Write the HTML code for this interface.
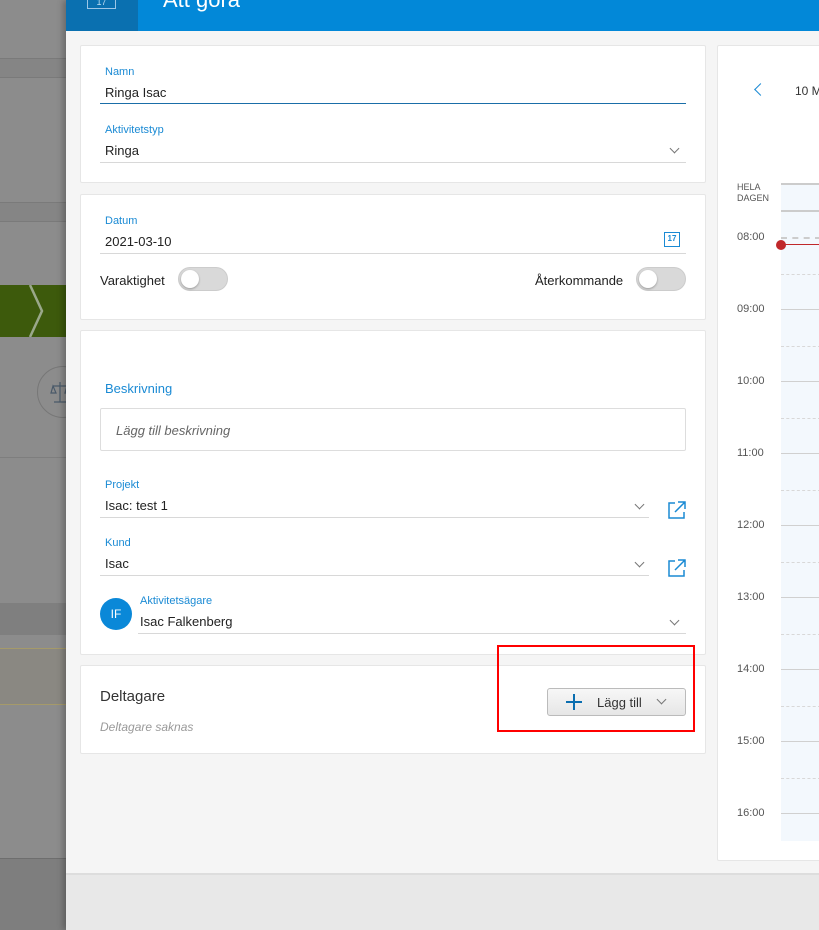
<!DOCTYPE html><html><head><meta charset="utf-8"><style>
*{margin:0;padding:0;box-sizing:border-box}
body{width:819px;height:930px;overflow:hidden;position:relative;font-family:"Liberation Sans",sans-serif;background:#8c8c8c}
.a{position:absolute}
.card{position:absolute;background:#fff;border:1px solid #e6e6e6;border-radius:2px}
.lbl{position:absolute;font-size:11px;color:#1a8ad4}
.val{position:absolute;font-size:13px;color:#222}
.ln{position:absolute;height:1px;background:#d8d8d8}
.chev{position:absolute;width:7px;height:7px;border-right:1px solid #777;border-bottom:1px solid #777;transform:rotate(45deg)}
.tog{position:absolute;width:50px;height:24px;border-radius:12px;background:#d9d9d9;border:1px solid #ccc}
.tog:after{content:"";position:absolute;left:2px;top:2px;width:18px;height:18px;border-radius:50%;background:#fff;box-shadow:0 1px 2px rgba(0,0,0,.3)}
.t{position:absolute;left:737px;font-size:11px;color:#555}
.hl{position:absolute;left:781px;width:40px;height:1px;background:#d0d0d0}
.dl{position:absolute;left:781px;width:40px;border-top:1px dashed #d8d8d8}
</style></head><body>
<div class="a" style="left:0;top:58px;width:66px;height:20px;background:#858585;border-top:1px solid #7a7a7a;border-bottom:1px solid #7a7a7a"></div>
<div class="a" style="left:0;top:202px;width:66px;height:20px;background:#858585;border-top:1px solid #7a7a7a;border-bottom:1px solid #7a7a7a"></div>
<div class="a" style="left:0;top:285px;width:66px;height:52px;background:#3d5a0c"></div>
<svg class="a" style="left:28px;top:285px" width="16" height="52"><path d="M2 0L14 26L2 52" fill="none" stroke="#9aa88a" stroke-width="2.5"/></svg>
<div class="a" style="left:37px;top:366px;width:52px;height:52px;border-radius:50%;border:1px solid #777"></div>
<svg class="a" style="left:50px;top:380px" width="20" height="24" fill="none" stroke="#4a5a6a" stroke-width="1.2"><path d="M10 2v20M4 22h12M3 6h14M3 6l-2 7h5zM17 6l-2 7h5z"/></svg>
<div class="a" style="left:0;top:457px;width:66px;height:10px;border-top:1px solid #7e7e7e"></div>
<div class="a" style="left:0;top:603px;width:66px;height:32px;background:#7f7f7f"></div>
<div class="a" style="left:0;top:648px;width:66px;height:57px;background:#8a8882;border-top:1px solid #a59a6a;border-bottom:1px solid #a59a6a"></div>
<div class="a" style="left:0;top:858px;width:66px;height:72px;background:#7e7e7e;border-top:1px solid #6e6e6e"></div>
<div class="a" style="left:66px;top:0;width:753px;height:930px;background:#f5f5f5;box-shadow:-3px 0 6px rgba(0,0,0,.25)"></div>
<div class="a" style="left:66px;top:0;width:753px;height:31px;background:#0288d8"></div>
<div class="a" style="left:66px;top:0;width:72px;height:31px;background:#0a70b0"></div>
<div class="a" style="left:87px;top:-4px;width:29px;height:13px;border:1px solid #9cc6e6;color:#bcdcf2;font-size:9px;text-align:center;line-height:10px">17</div>
<div class="a" style="left:163px;top:-13px;font-size:22px;color:#fff">Att göra</div>
<div class="a" style="left:66px;top:873px;width:753px;height:57px;background:#e8e8e8;border-top:2px solid #ddd"></div>
<div class="card" style="left:80px;top:45px;width:626px;height:138px"></div>
<div class="lbl" style="left:105px;top:66px">Namn</div>
<div class="val" style="left:105px;top:85px">Ringa Isac</div>
<div class="a" style="left:100px;top:103px;width:586px;height:1px;background:#1a6ea8"></div>
<div class="lbl" style="left:105px;top:124px">Aktivitetstyp</div>
<div class="val" style="left:105px;top:143px">Ringa</div>
<div class="ln" style="left:100px;top:162px;width:586px"></div>
<div class="chev" style="left:671px;top:145px"></div>
<div class="card" style="left:80px;top:194px;width:626px;height:126px"></div>
<div class="lbl" style="left:105px;top:215px">Datum</div>
<div class="val" style="left:105px;top:234px">2021-03-10</div>
<div class="ln" style="left:100px;top:253px;width:586px"></div>
<div class="a" style="left:664px;top:232px;width:16px;height:15px;border:1.5px solid #1a8ad4;font-size:8px;color:#1a8ad4;text-align:center;line-height:11px;font-weight:bold">17</div>
<div class="val" style="left:100px;top:273px">Varaktighet</div>
<div class="tog" style="left:178px;top:267px"></div>
<div class="val" style="left:535px;top:273px">Återkommande</div>
<div class="tog" style="left:636px;top:267px"></div>
<div class="card" style="left:80px;top:330px;width:626px;height:325px"></div>
<div class="a" style="left:105px;top:381px;font-size:13px;color:#1a8ad4">Beskrivning</div>
<div class="a" style="left:100px;top:408px;width:586px;height:43px;border:1px solid #ddd;border-radius:2px"></div>
<div class="a" style="left:116px;top:423px;font-size:13px;color:#666;font-style:italic">Lägg till beskrivning</div>
<div class="lbl" style="left:105px;top:479px">Projekt</div>
<div class="val" style="left:105px;top:498px">Isac: test 1</div>
<div class="ln" style="left:100px;top:517px;width:549px"></div>
<div class="chev" style="left:636px;top:501px"></div>
<svg class="a" style="left:668px;top:501px" width="18" height="18" viewBox="0 0 18 18" fill="none" stroke="#1a8ad4" stroke-width="1.5"><path d="M7 2H1v15h15v-6M10 1h7v7M17 1L7 11"/></svg>
<div class="lbl" style="left:105px;top:537px">Kund</div>
<div class="val" style="left:105px;top:556px">Isac</div>
<div class="ln" style="left:100px;top:575px;width:549px"></div>
<div class="chev" style="left:636px;top:559px"></div>
<svg class="a" style="left:668px;top:559px" width="18" height="18" viewBox="0 0 18 18" fill="none" stroke="#1a8ad4" stroke-width="1.5"><path d="M7 2H1v15h15v-6M10 1h7v7M17 1L7 11"/></svg>
<div class="a" style="left:100px;top:598px;width:32px;height:32px;border-radius:50%;background:#0a88d8;color:#fff;font-size:12px;text-align:center;line-height:32px">IF</div>
<div class="lbl" style="left:140px;top:595px">Aktivitetsägare</div>
<div class="val" style="left:140px;top:614px">Isac Falkenberg</div>
<div class="ln" style="left:138px;top:633px;width:548px"></div>
<div class="chev" style="left:671px;top:617px"></div>
<div class="card" style="left:80px;top:665px;width:626px;height:89px"></div>
<div class="a" style="left:100px;top:688px;font-size:15px;color:#333">Deltagare</div>
<div class="a" style="left:100px;top:720px;font-size:12px;color:#999;font-style:italic">Deltagare saknas</div>
<div class="a" style="left:547px;top:688px;width:139px;height:28px;border:1px solid #bbb;border-radius:3px;background:linear-gradient(#f7f7f7,#e6e6e6)"></div>
<div class="a" style="left:566px;top:701px;width:16px;height:2px;background:#0a6eb0"></div>
<div class="a" style="left:573px;top:694px;width:2px;height:16px;background:#0a6eb0"></div>
<div class="a" style="left:597px;top:695px;font-size:13px;color:#333">Lägg till</div>
<div class="chev" style="left:658px;top:696px"></div>
<div class="a" style="left:497px;top:645px;width:198px;height:87px;border:2px solid #f00"></div>
<div class="card" style="left:717px;top:45px;width:110px;height:816px"></div>
<div class="a" style="left:756px;top:85px;width:9px;height:9px;border-left:1.5px solid #1a8ad4;border-bottom:1.5px solid #1a8ad4;transform:rotate(45deg)"></div>
<div class="a" style="left:795px;top:84px;font-size:12px;color:#333;white-space:nowrap">10 Mars</div>
<div class="a" style="left:781px;top:183px;width:40px;height:658px;background:#f3f8fd"></div>
<div class="hl" style="top:183px;background:#ccc;height:2px"></div>
<div class="hl" style="top:210px;background:#ccc;height:2px"></div>
<div class="t" style="top:182px;font-size:9px;line-height:11px">HELA<br>DAGEN</div>
<div class="t" style="top:231px">08:00</div>
<div class="dl" style="top:237px;border-top:2px dashed #ccc"></div>
<div class="a" style="left:781px;top:244px;width:40px;height:1px;background:#c0282a"></div>
<div class="a" style="left:776px;top:240px;width:10px;height:10px;border-radius:50%;background:#c0282a"></div>
<div class="dl" style="top:274px"></div>
<div class="t" style="top:303px">09:00</div><div class="hl" style="top:309px"></div><div class="dl" style="top:346px"></div>
<div class="t" style="top:375px">10:00</div><div class="hl" style="top:381px"></div><div class="dl" style="top:418px"></div>
<div class="t" style="top:447px">11:00</div><div class="hl" style="top:453px"></div><div class="dl" style="top:490px"></div>
<div class="t" style="top:519px">12:00</div><div class="hl" style="top:525px"></div><div class="dl" style="top:562px"></div>
<div class="t" style="top:591px">13:00</div><div class="hl" style="top:597px"></div><div class="dl" style="top:634px"></div>
<div class="t" style="top:663px">14:00</div><div class="hl" style="top:669px"></div><div class="dl" style="top:706px"></div>
<div class="t" style="top:735px">15:00</div><div class="hl" style="top:741px"></div><div class="dl" style="top:778px"></div>
<div class="t" style="top:807px">16:00</div><div class="hl" style="top:813px"></div>
</body></html>
